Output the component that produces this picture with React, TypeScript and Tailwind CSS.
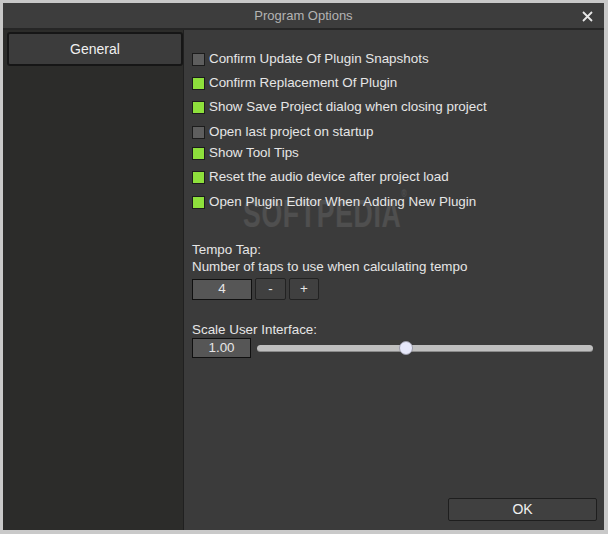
import React from 'react';

const options = [
  { label: 'Confirm Update Of Plugin Snapshots', on: false },
  { label: 'Confirm Replacement Of Plugin', on: true },
  { label: 'Show Save Project dialog when closing project', on: true },
  { label: 'Open last project on startup', on: false },
  { label: 'Show Tool Tips', on: true },
  { label: 'Reset the audio device after project load', on: true },
  { label: 'Open Plugin Editor When Adding New Plugin', on: true },
];

// row spacing in the original is slightly uneven
const rowClass = [
  'h-[24px] flex items-center gap-[4px]',
  'h-[24px] flex items-center gap-[4px]',
  'h-[24px] flex items-center gap-[4px]',
  'h-[24px] flex items-center gap-[4px] mt-[1px]',
  'h-[22px] flex items-center gap-[4px] -mt-[2px]',
  'h-[24px] flex items-center gap-[4px] mt-[1px]',
  'h-[24px] flex items-center gap-[4px] mt-[1px]',
];

function Check({ on }: { on: boolean }) {
  return (
    <span
      className={
        on
          ? 'w-[13px] h-[13px] shrink-0 border border-[#1c1c1c] bg-[#8ee03c]'
          : 'w-[13px] h-[13px] shrink-0 border border-[#1c1c1c] bg-[#5e5e5e]'
      }
    />
  );
}

export default function App() {
  return (
    <div
      className="w-[608px] h-[534px] bg-[#c9c9c9] pt-[3px] pl-[3px] pr-[4px] pb-[4px] text-[#e6e6e6] text-[13.4px]"
      style={{ fontFamily: '"Liberation Sans", Arial, sans-serif' }}
    >
      <div className="flex flex-col h-full bg-[#3b3b3b]">
        {/* title bar */}
        <div className="relative h-[27px] shrink-0 flex items-center justify-center bg-[#3d3d3d] border-b-2 border-[#262626]">
          <span className="text-[#b4b4b4] text-[13px]">Program Options</span>
          <svg className="absolute right-[11px] top-[8px]" width="11" height="11" viewBox="0 0 11 11">
            <path d="M1 1 L10 10 M10 1 L1 10" stroke="#e6e6e6" strokeWidth="1.8" />
          </svg>
        </div>

        <div className="flex flex-1 min-h-0">
          {/* sidebar */}
          <div className="w-[181px] shrink-0 bg-[#2c2c2a] border-r border-[#202020] pt-[2px] pl-[4px]">
            <div className="h-[34px] flex items-center justify-center rounded-[3px] border-2 border-[#161616] bg-[#3c3c3c] text-[14px] text-[#f0f0f0]">
              General
            </div>
          </div>

          {/* content */}
          <div className="relative flex-1 flex flex-col pl-[8px] pr-[10px] pt-[17px] pb-[9px]">
            <div className="flex flex-col">
              {options.map((o, i) => (
                <div key={o.label} className={rowClass[i]}>
                  <Check on={o.on} />
                  <span>{o.label}</span>
                </div>
              ))}
            </div>

            <div className="mt-[27px] leading-[17px]">Tempo Tap:</div>
            <div className="leading-[17px]">Number of taps to use when calculating tempo</div>
            <div className="flex items-center gap-[3px] mt-[3px]">
              <div className="w-[60px] h-[21px] flex items-center justify-center bg-[#565656] border border-[#101010]">
                4
              </div>
              <div className="w-[31px] h-[22px] flex items-center justify-center bg-[#404040] border border-[#222] rounded-[2px]">
                -
              </div>
              <div className="w-[30px] h-[22px] flex items-center justify-center bg-[#404040] border border-[#222] rounded-[2px]">
                +
              </div>
            </div>

            <div className="mt-[21px] leading-[17px]">Scale User Interface:</div>
            <div className="flex items-center gap-[6px] pr-[1px]">
              <div className="w-[59px] h-[20px] flex items-center justify-center bg-[#565656] border border-[#101010]">
                1.00
              </div>
              <div className="relative flex-1 h-[7px] rounded-full bg-[#bfbfbf] border-b border-[#8a8a8a]">
                <div className="absolute left-[142px] -top-[4px] w-[14px] h-[14px] rounded-full bg-[#e6e8fa] border border-[#9a9aa8]" />
              </div>
            </div>

            <div className="flex-1" />
            <div className="flex justify-end -mr-[3px]">
              <div className="w-[149px] h-[23px] flex items-center justify-center bg-[#404040] border border-[#1e1e1e] rounded-[2px] text-[14px] text-[#f0f0f0]">
                OK
              </div>
            </div>

            {/* watermark */}
            <div className="absolute left-[59px] top-[156px] text-[38px] font-bold tracking-[1px] text-[#ffffff]/10 pointer-events-none scale-x-[0.7] origin-left whitespace-nowrap">
              SOFTPEDIA<span className="text-[10px] align-top">®</span>
            </div>
          </div>
        </div>
      </div>
    </div>
  );
}
